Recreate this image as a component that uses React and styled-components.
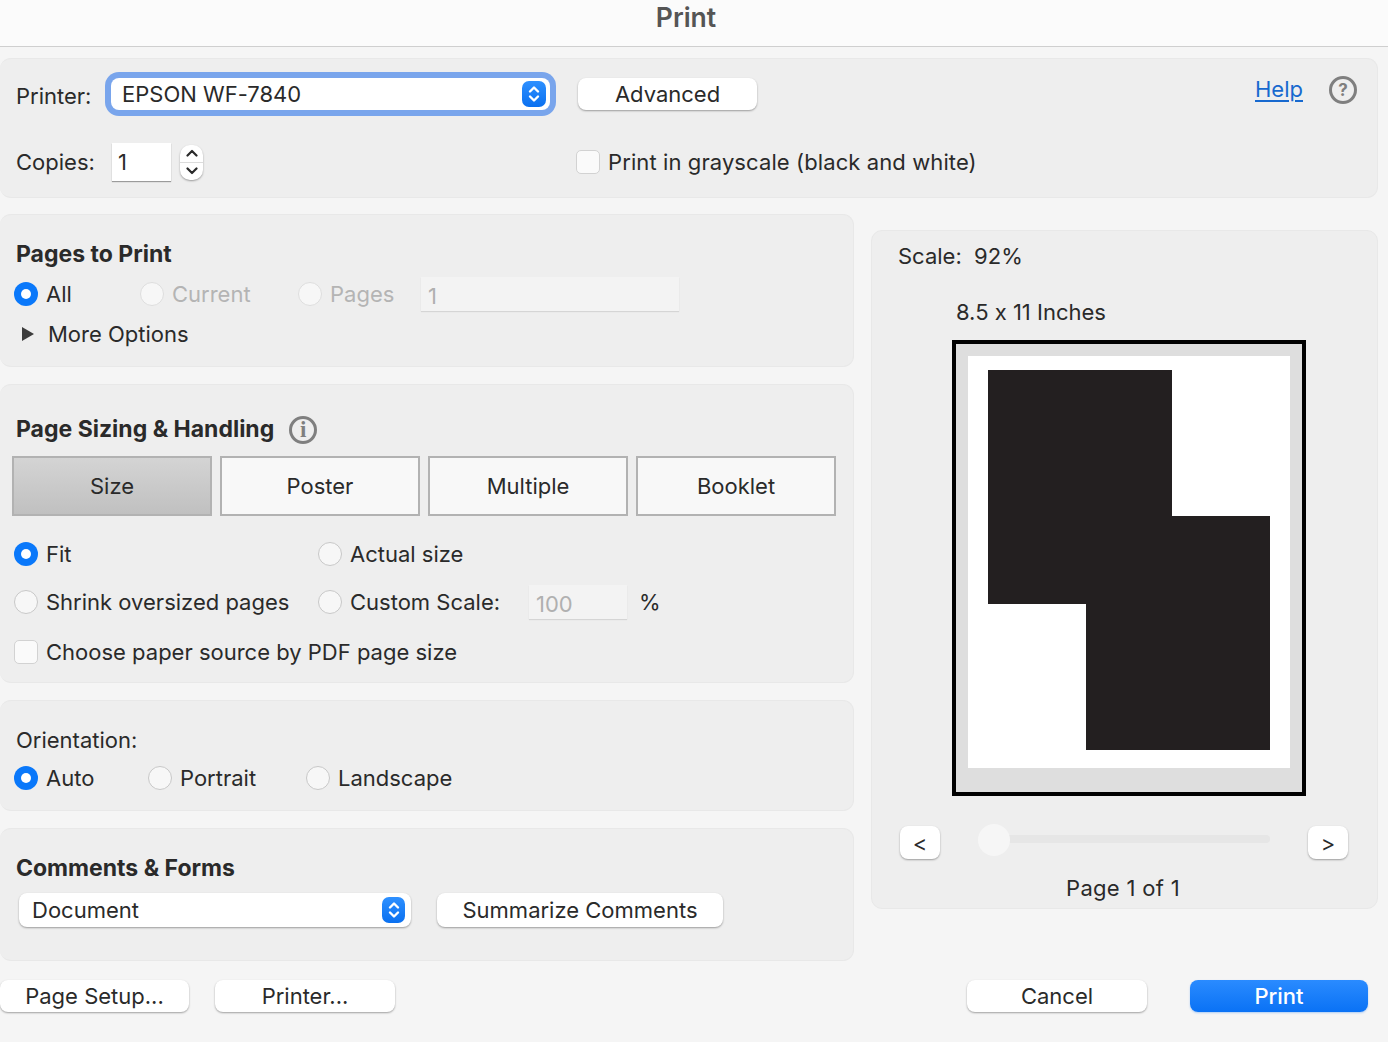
import React from 'react';
import styled, { createGlobalStyle } from 'styled-components';

const Global = createGlobalStyle`
    html, body {
        margin: 0;
        padding: 0;
        background: #f5f5f5;
    }
    * {
        box-sizing: border-box;
    }
`;

const Page = styled.div`
    width: 1388px;
    height: 1042px;
    overflow: hidden;
    background: #f5f5f5;
    color: #2a2a2a;
    font-family: Inter, "Liberation Sans", sans-serif;
    font-size: 22px;
    font-feature-settings: "calt" 0;
`;

const TitleBar = styled.div`
    height: 47px;
    padding: 0 16px 12px 0;
    background: #fbfbfb;
    border-bottom: 1px solid #cfcfcf;
    display: flex;
    align-items: center;
    justify-content: center;
    font-size: 26.5px;
    font-weight: 600;
    color: #555;
`;

const Panel = styled.section`
    background: #eeeeee;
    border: 1px solid #e8e8e8;
    border-left: 0;
    border-radius: 11px;
`;

const TopPanel = styled(Panel)`
    height: 140px;
    margin: 11px 10px 0 0;
    padding: 11px 20px 0 16px;
`;

const Row = styled.div`
    display: flex;
    align-items: center;
    height: ${(p) => p.$h || 40}px;
    margin-top: ${(p) => p.$mt || 0}px;
    margin-left: ${(p) => p.$ml || 0}px;
`;

const Label = styled.span`
    flex: none;
    white-space: nowrap;
    width: ${(p) => (p.$w ? `${p.$w}px` : 'auto')};
    margin-top: ${(p) => p.$mt || 0}px;
    margin-left: ${(p) => p.$ml || 0}px;
    letter-spacing: ${(p) => p.$ls || 0}px;
    color: ${(p) => (p.$disabled ? '#b4b4b4' : 'inherit')};
`;

const FocusRing = styled.div`
    width: 451px;
    height: 44px;
    padding: 6px;
    margin-left: 12px;
    background: #79a5ec;
    border-radius: 14px;
`;

const Select = styled.div`
    display: flex;
    align-items: center;
    justify-content: space-between;
    width: ${(p) => p.$w || 439}px;
    height: ${(p) => p.$h || 32}px;
    padding: 0 ${(p) => p.$pr || 4}px 0 ${(p) => p.$pl || 11}px;
    background: #fff;
    border-radius: 8px;
    box-shadow: ${(p) => (p.$flat ? 'none' : '0 1px 2px rgba(0, 0, 0, 0.35)')};
`;

const Caret = styled.span`
    display: flex;
    align-items: center;
    justify-content: center;
    width: ${(p) => p.$w || 24}px;
    height: 26px;
    background: linear-gradient(#2e90ff, #0a70f0);
    border-radius: 7px;
`;

const Button = styled.button`
    flex: none;
    width: ${(p) => p.$w}px;
    height: ${(p) => p.$h || 32}px;
    margin-left: ${(p) => p.$ml || 0}px;
    padding: 0;
    border: 0;
    border-radius: 8px;
    background: #fff;
    box-shadow: 0 1px 2px rgba(0, 0, 0, 0.35);
    color: #2a2a2a;
    font: inherit;
`;

const PrimaryButton = styled(Button)`
    background: linear-gradient(#2a8bff, #0a72f5);
    box-shadow: 0 1px 2px rgba(10, 114, 245, 0.3);
    color: #fff;
    font-weight: 500;
`;

const HelpLink = styled.a`
    margin-left: auto;
    margin-top: -11px;
    color: #1769cf;
    text-decoration: underline;
    text-underline-offset: 3px;
`;

const HelpBadge = styled.span`
    display: flex;
    align-items: center;
    justify-content: center;
    width: 28px;
    height: 28px;
    margin: -8px 0 0 26px;
    border: 3px solid #7f7f7f;
    border-radius: 50%;
    color: #7f7f7f;
    font-size: 17px;
    font-weight: 700;
`;

const InfoBadge = styled(HelpBadge)`
    margin: 2px 0 0 15px;
    font-family: "Liberation Serif", serif;
    font-size: 23px;
`;

const NumberField = styled.div`
    display: flex;
    align-items: center;
    width: 59px;
    height: 38px;
    margin-left: 16px;
    padding-left: 6px;
    background: #fff;
    box-shadow: 0 1px 1px rgba(0, 0, 0, 0.35);
`;

const Stepper = styled.div`
    display: flex;
    flex-direction: column;
    width: 23px;
    height: 35px;
    margin-left: 9px;
    background: #fff;
    border-radius: 10px;
    box-shadow: 0 1px 2px rgba(0, 0, 0, 0.35);
`;

const StepperHalf = styled.span`
    flex: 1;
    display: flex;
    align-items: center;
    justify-content: center;
    & + & {
        border-top: 1px solid #dcdcdc;
    }
`;

const Checkbox = styled.span`
    flex: none;
    width: 24px;
    height: 24px;
    margin-left: ${(p) => p.$ml || 0}px;
    margin-right: 8px;
    background: #fafafa;
    border: 1px solid #d2d2d2;
    border-radius: 5px;
`;

const LeftColumn = styled.div`
    width: 854px;
    display: flex;
    flex-direction: column;
    gap: 17px;
`;

const Main = styled.div`
    display: flex;
    align-items: flex-start;
    gap: 17px;
    margin-top: 16px;
    padding-right: 10px;
`;

const Section = styled(Panel)`
    height: ${(p) => p.$h}px;
    padding: ${(p) => p.$pt || 19}px 0 0 16px;
`;

const Heading = styled.h2`
    margin: 0;
    height: 40px;
    display: flex;
    align-items: center;
    font-size: 23px;
    font-weight: 700;
`;

const RadioItem = styled.label`
    display: flex;
    align-items: center;
    flex: none;
    width: ${(p) => (p.$w ? `${p.$w}px` : 'auto')};
    margin-left: ${(p) => p.$ml || 0}px;
`;

const RadioDot = styled.span`
    flex: none;
    width: 24px;
    height: 24px;
    margin-right: 8px;
    border-radius: 50%;
    background: ${(p) => (p.$on ? '#0a78fa' : '#f7f7f7')};
    border: ${(p) => (p.$on ? '0' : `1px solid ${p.$disabled ? '#dedede' : '#c8c8c8'}`)};
    display: flex;
    align-items: center;
    justify-content: center;
    &::after {
        content: '';
        display: ${(p) => (p.$on ? 'block' : 'none')};
        width: 10px;
        height: 10px;
        border-radius: 50%;
        background: #fff;
    }
`;

const Radio = ({ on, disabled, w, ml, children }) => (
    <RadioItem $w={w} $ml={ml}>
        <RadioDot $on={on} $disabled={disabled} />
        <Label $disabled={disabled}>{children}</Label>
    </RadioItem>
);

const GhostField = styled.div`
    flex: none;
    display: flex;
    align-items: center;
    width: ${(p) => p.$w}px;
    height: 34px;
    padding: 4px 0 0 7px;
    background: #f3f3f3;
    box-shadow: 0 1px 1px rgba(0, 0, 0, 0.1);
    color: #b0b0b0;
`;

const Triangle = styled.span`
    width: 0;
    height: 0;
    margin: 0 14px 0 6px;
    border-style: solid;
    border-width: 7px 0 7px 12px;
    border-color: transparent transparent transparent #3c3c3c;
`;

const Tabs = styled.div`
    display: flex;
    gap: 8px;
    margin: 7px 0 0 -4px;
`;

const Tab = styled.div`
    width: 200px;
    height: 60px;
    display: flex;
    align-items: center;
    justify-content: center;
    border: 2px solid #b2b2b2;
    background: ${(p) => (p.$active ? 'linear-gradient(#d4d4d4, #c0c0c0)' : '#f8f8f8')};
`;

const PreviewPanel = styled(Panel)`
    width: 507px;
    height: 679px;
    margin-top: 16px;
    border-left: 1px solid #e8e8e8;
    padding: 5px 29px 0 26px;
`;

const Sheet = styled.div`
    width: 354px;
    height: 456px;
    margin: 8px 0 0 54px;
    padding: 12px 12px 24px;
    background: #dedede;
    border: 4px solid #000;
`;

const Paper = styled.div`
    height: 100%;
    background: #fff;
    svg {
        display: block;
    }
`;

const Pager = styled.div`
    display: flex;
    align-items: center;
    gap: 38px;
    margin: 30px 0 0 2px;
`;

const Track = styled.div`
    position: relative;
    flex: 1;
    height: 8px;
    margin: -7px 0 0 16px;
    background: #e6e6e6;
    border-radius: 4px;
`;

const Thumb = styled.span`
    position: absolute;
    left: -16px;
    top: -11px;
    width: 32px;
    height: 32px;
    border-radius: 50%;
    background: #f6f6f6;
`;

const PageCount = styled.div`
    height: 40px;
    margin-top: 9px;
    display: flex;
    align-items: center;
    justify-content: center;
    letter-spacing: 0.3px;
`;

const Footer = styled.div`
    display: flex;
    margin-top: 19px;
    padding-right: 20px;
`;

const Chevrons = ({ color = '#fff' }) => (
    <svg width="12" height="20" viewBox="0 0 12 20" fill="none" stroke={color} strokeWidth="2.4" strokeLinecap="round" strokeLinejoin="round">
        <path d="M2 7.5 6 3.5l4 4" />
        <path d="M2 12.5 6 16.5l4-4" />
    </svg>
);

const Chevron = ({ down }) => (
    <svg width="12" height="8" viewBox="0 0 12 8" fill="none" stroke="#2a2a2a" strokeWidth="2.2" strokeLinecap="round" strokeLinejoin="round">
        <path d={down ? 'M1.5 1.5 6 6l4.5-4.5' : 'M1.5 6.5 6 2l4.5 4.5'} />
    </svg>
);

const App = () => {
    return (
        <Page>
            <Global />
            <TitleBar>Print</TitleBar>

            <TopPanel>
                <Row $h={48}>
                    <Label $w={77} $mt={3}>Printer:</Label>
                    <FocusRing>
                        <Select $flat>
                            <Label>EPSON WF-7840</Label>
                            <Caret><Chevrons /></Caret>
                        </Select>
                    </FocusRing>
                    <Button $w={179} $ml={22}>Advanced</Button>
                    <HelpLink>Help</HelpLink>
                    <HelpBadge>?</HelpBadge>
                </Row>
                <Row $h={40} $mt={24}>
                    <Label $w={80}>Copies:</Label>
                    <NumberField>1</NumberField>
                    <Stepper>
                        <StepperHalf><Chevron /></StepperHalf>
                        <StepperHalf><Chevron down /></StepperHalf>
                    </Stepper>
                    <Checkbox $ml={373} />
                    <Label $ls={0.1}>Print in grayscale (black and white)</Label>
                </Row>
            </TopPanel>

            <Main>
                <LeftColumn>
                    <Section $h={153}>
                        <Heading>Pages to Print</Heading>
                        <Row>
                            <Radio on w={126} ml={-2}>All</Radio>
                            <Radio disabled w={158}>Current</Radio>
                            <Radio disabled w={123}>Pages</Radio>
                            <GhostField $w={258}>1</GhostField>
                        </Row>
                        <Row>
                            <Triangle />
                            <Label>More Options</Label>
                        </Row>
                    </Section>

                    <Section $h={299} $pt={24}>
                        <Heading>
                            Page Sizing &amp; Handling
                            <InfoBadge>i</InfoBadge>
                        </Heading>
                        <Tabs>
                            <Tab $active>Size</Tab>
                            <Tab>Poster</Tab>
                            <Tab>Multiple</Tab>
                            <Tab>Booklet</Tab>
                        </Tabs>
                        <Row $mt={18}>
                            <Radio on w={304} ml={-2}>Fit</Radio>
                            <Radio>Actual size</Radio>
                        </Row>
                        <Row $mt={8}>
                            <Radio w={304} ml={-2}>Shrink oversized pages</Radio>
                            <Radio w={211}>Custom Scale:</Radio>
                            <GhostField $w={98}>100</GhostField>
                            <Label $ml={12}>%</Label>
                        </Row>
                        <Row $mt={10} $ml={-2}>
                            <Checkbox />
                            <Label>Choose paper source by PDF page size</Label>
                        </Row>
                    </Section>

                    <Section $h={111}>
                        <Row><Label>Orientation:</Label></Row>
                        <Row $mt={-2}>
                            <Radio on w={134} ml={-2}>Auto</Radio>
                            <Radio w={158}>Portrait</Radio>
                            <Radio>Landscape</Radio>
                        </Row>
                    </Section>

                    <Section $h={133}>
                        <Heading>Comments &amp; Forms</Heading>
                        <Row $h={34} $mt={5} $ml={3}>
                            <Select $w={392} $h={34} $pl={13} $pr={6}>
                                <Label>Document</Label>
                                <Caret $w={23}><Chevrons /></Caret>
                            </Select>
                            <Button $w={286} $h={34} $ml={26}>Summarize Comments</Button>
                        </Row>
                    </Section>
                </LeftColumn>

                <PreviewPanel>
                    <Row>Scale:&nbsp; 92%</Row>
                    <Row $mt={16} $ml={58}>8.5 x 11 Inches</Row>
                    <Sheet>
                        <Paper>
                            <svg width="322" height="412" viewBox="0 0 322 412">
                                <path d="M20 14h184v146h98v234H118V248H20z" fill="#231f20" />
                            </svg>
                        </Paper>
                    </Sheet>
                    <Pager>
                        <Button $w={40} $h={33}>&lt;</Button>
                        <Track><Thumb /></Track>
                        <Button $w={40} $h={33}>&gt;</Button>
                    </Pager>
                    <PageCount>Page 1 of 1</PageCount>
                </PreviewPanel>
            </Main>

            <Footer>
                <Button $w={189}>Page Setup...</Button>
                <Button $w={180} $ml={26}>Printer...</Button>
                <Button $w={180} $ml={572}>Cancel</Button>
                <PrimaryButton $w={178} $ml={43}>Print</PrimaryButton>
            </Footer>
        </Page>
    );
};

export default App;
